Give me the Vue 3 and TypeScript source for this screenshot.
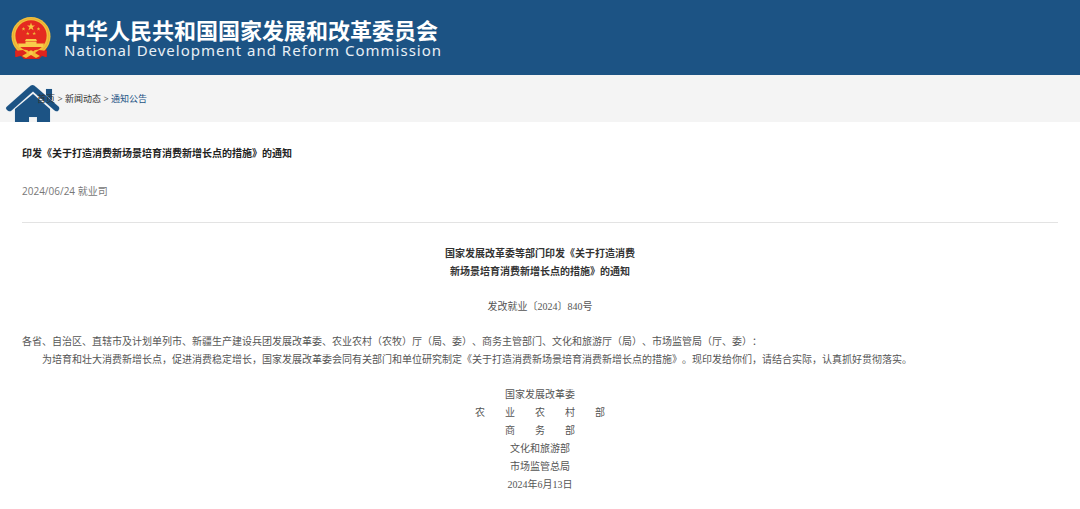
<script setup lang="ts">
interface Crumb {
  label: string
  current?: boolean
}

const crumbs: Crumb[] = [
  { label: '首页' },
  { label: '新闻动态' },
  { label: '通知公告', current: true },
]

const signers: string[] = [
  '国家发展改革委',
  '农　　业　　农　　村　　部',
  '商　　务　　部',
  '文化和旅游部',
  '市场监管总局',
  '2024年6月13日',
]
</script>

<template>
  <div class="page">
    <header class="banner">
      <svg class="emblem" viewBox="0 0 40 42" aria-hidden="true">
        <path d="M5 29 L4 40 L10 39 L13 42 L28 42 L31 39 L36 40 L35 29 Z" fill="#d3201c" />
        <circle cx="20" cy="19.500" r="19.500" fill="#f2bf3b" />
        <circle cx="20" cy="19.500" r="17.800" fill="none" stroke="#dfa22c" stroke-width="0.600" />
        <circle cx="20" cy="18.800" r="15.600" fill="#e52a20" />
        <path d="M20 5.500 L21 8.400 L24 8.500 L21.600 10.300 L22.500 13.200 L20 11.500 L17.500 13.200 L18.400 10.300 L16 8.500 L19 8.400 Z" fill="#f7c640" />
        <g fill="#efb638">
          <path d="M12.500 10 l.5 1.300 h1.300 l-1 .8 .4 1.400 -1.200 -.8 -1.200 .8 .4 -1.400 -1 -.8 h1.300 Z" />
          <path d="M27.500 10 l.5 1.300 h1.300 l-1 .8 .4 1.400 -1.200 -.8 -1.200 .8 .4 -1.400 -1 -.8 h1.300 Z" />
          <path d="M16.800 14.600 l.5 1.300 h1.300 l-1 .8 .4 1.400 -1.200 -.8 -1.200 .8 .4 -1.400 -1 -.8 h1.300 Z" />
          <path d="M23.200 14.600 l.5 1.300 h1.300 l-1 .8 .4 1.400 -1.200 -.8 -1.200 .8 .4 -1.400 -1 -.8 h1.300 Z" />
        </g>
        <path d="M15 22 H25 L26 24 H14 Z M14.500 24.500 H25.500 V26.500 H33 L32 30 H8 L7 26.500 H14.500 Z" fill="#f8cc4a" />
        <path d="M4 34 L12 33 L16 34 H24 L28 33 L36 34 L35 40 L29 38 L25 41 H15 L11 38 L5 40 Z" fill="#df241d" />
        <path d="M12 33 Q16 32 18 34.500 Q20 32 22 34.500 Q24 32 28 33 L24 36 L29 39 L25 41 L20 38 L15 41 L11 39 L16 36 Z" fill="#f4bd37" />
        <circle cx="20" cy="36" r="2" fill="#f8cc4a" />
      </svg>
      <div class="brand">
        <span class="brand-cn">中华人民共和国国家发展和改革委员会</span>
        <span class="brand-en">National Development and Reform Commission</span>
      </div>
    </header>

    <nav class="crumb-bar" aria-label="当前位置">
      <svg class="house" viewBox="0 0 56 48" aria-hidden="true">
        <g fill="#1c5384" stroke="#dce6ee" stroke-width="1" paint-order="stroke">
          <path d="M41 4 H47 V18 L41 12 Z" />
          <path d="M10 24 L28 9 L45 24 V48 H32 V32 H24 V48 H10 Z" />
          <path d="M27.500 0 Q29 0 31 2 L54 22 Q55 24 53 26 Q51 27 49 25 L28 6.500 L6 26 Q4 27 2 25 Q0 23 2 21.500 L24 2 Q26 0 27.500 0 Z" />
        </g>
      </svg>
      <ol class="crumbs">
        <li v-for="crumb in crumbs" :key="crumb.label">
          <a href="#" :class="{ current: crumb.current }">{{ crumb.label }}</a>
        </li>
      </ol>
    </nav>

    <main class="article">
      <h1>印发《关于打造消费新场景培育消费新增长点的措施》的通知</h1>
      <p class="meta">2024/06/24 就业司</p>
      <hr />
      <div class="content">
        <h2>国家发展改革委等部门印发《关于打造消费<br />新场景培育消费新增长点的措施》的通知</h2>
        <p class="center">发改就业〔2024〕840号</p>
        <div>
          <p>各省、自治区、直辖市及计划单列市、新疆生产建设兵团发展改革委、农业农村（农牧）厅（局、委）、商务主管部门、文化和旅游厅（局）、市场监管局（厅、委）：</p>
          <p class="indent">为培育和壮大消费新增长点，促进消费稳定增长，国家发展改革委会同有关部门和单位研究制定《关于打造消费新场景培育消费新增长点的措施》。现印发给你们，请结合实际，认真抓好贯彻落实。</p>
        </div>
        <div class="center signers">
          <p v-for="line in signers" :key="line">{{ line }}</p>
        </div>
      </div>
    </main>
  </div>
</template>

<style>
body {
  background: #fff;
}
</style>

<style scoped>
.page {
  font-family: "Open Sans", "Noto Sans CJK SC", sans-serif;
  color: #555;
  text-spacing-trim: space-all;
}

.banner {
  display: flex;
  align-items: center;
  gap: 13px;
  box-sizing: border-box;
  height: 75px;
  padding-left: 11px;
  background: #1c5384;
}

.emblem {
  width: 40px;
  height: 42px;
  flex: none;
}

.brand {
  display: flex;
  flex-direction: column;
  padding-top: 2px;
  color: #fff;
  white-space: nowrap;
}

.brand-cn {
  font-size: 22px;
  font-weight: 700;
  line-height: 23px;
}

.brand-en {
  font-family: "Noto Sans", sans-serif;
  font-size: 15px;
  line-height: 16px;
  letter-spacing: 1px;
  color: #e8eff5;
}

.crumb-bar {
  position: relative;
  display: flex;
  align-items: center;
  height: 47px;
  padding-left: 37px;
  overflow: hidden;
  background: #f4f4f4;
}

.house {
  position: absolute;
  left: 5px;
  top: 10px;
  width: 56px;
  height: 48px;
}

.crumbs {
  position: relative;
  display: flex;
  margin: 0;
  padding: 0;
  list-style: none;
  font-size: 9px;
  line-height: 18px;
}

.crumbs li {
  display: flex;
}

.crumbs li + li::before {
  content: ">";
  width: 10px;
  text-align: center;
}

.crumbs a {
  color: #333;
  text-decoration: none;
}

.crumbs a.current {
  color: #1c5384;
}

.article {
  padding: 22px 22px 16px;
}

h1 {
  margin: 0;
  font-size: 10px;
  line-height: 18px;
  color: #222;
}

.meta {
  margin: 20px 0 0;
  font-size: 10px;
  line-height: 18px;
  color: #777;
}

hr {
  height: 1px;
  margin: 22px 0;
  border: 0;
  background: #e3e3e3;
}

.content {
  display: flex;
  flex-direction: column;
  gap: 17px;
  font-family: "Liberation Serif", "Noto Sans CJK SC", serif;
  font-size: 10px;
  line-height: 18px;
}

.content p {
  margin: 0;
}

.content h2 {
  margin: 0;
  font-size: 10px;
  text-align: center;
  color: #333;
}

.content .center {
  text-align: center;
}

.content .indent {
  text-indent: 2em;
}

.signers {
  white-space: pre-wrap;
}
</style>
